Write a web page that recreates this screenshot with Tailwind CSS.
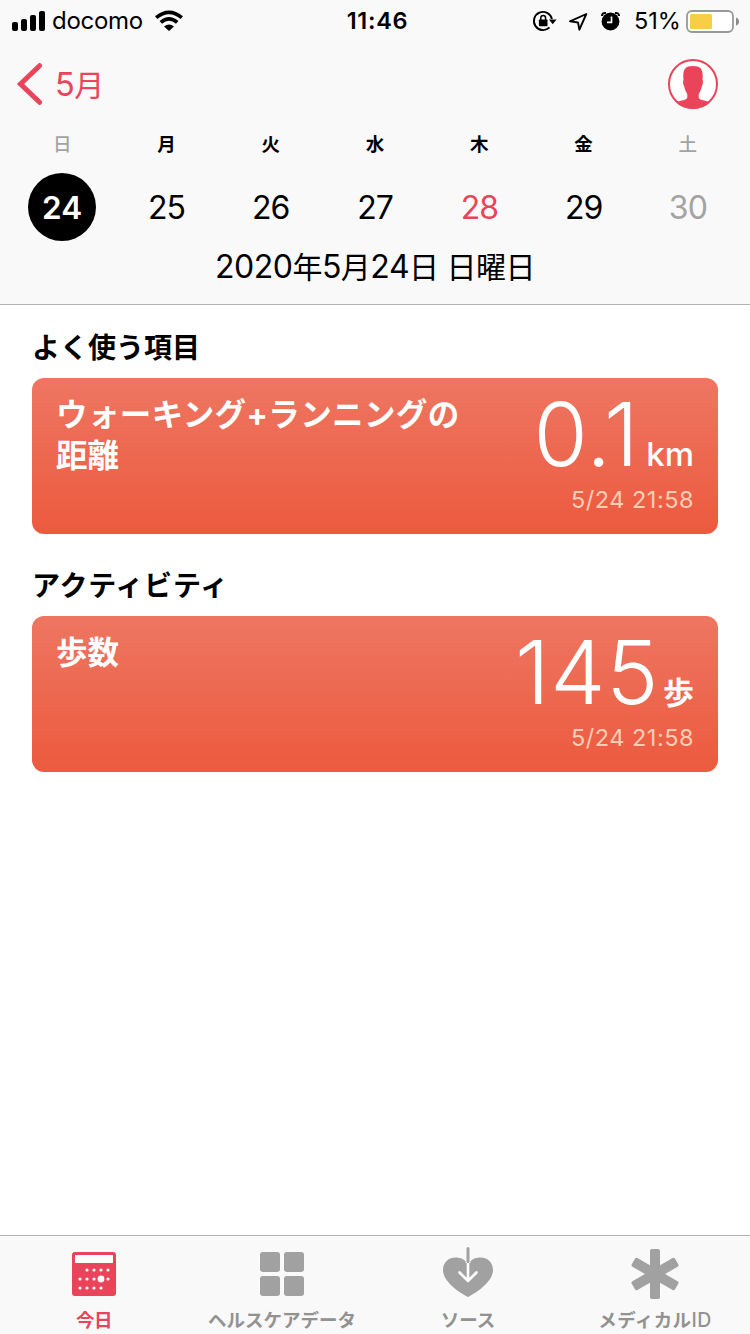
<!DOCTYPE html>
<html lang="ja">
<head>
<meta charset="utf-8">
<title>ヘルスケア</title>
<script src="https://cdn.jsdelivr.net/npm/@tailwindcss/browser@4"></script>
</head>
<body class="w-[750px] h-[1334px] overflow-hidden bg-white text-black font-['Inter','Noto_Sans_CJK_JP',sans-serif] flex flex-col">
<header class="h-[305px] bg-[#f9f9f9] border-b border-[#b2b2b2] flex flex-col shrink-0">
  <div class="h-10 grid grid-cols-[330px_95px_325px]">
    <div class="flex items-center">
      <svg class="ml-3 w-[34px] h-10 shrink-0" viewBox="12 0 34 40"><rect x="12" y="21" width="6" height="9" rx="2"/><rect x="21" y="18" width="6" height="12" rx="2"/><rect x="30" y="14" width="6" height="16" rx="2"/><rect x="39" y="10" width="6" height="20" rx="2"/></svg>
      <span class="ml-1.5 w-[102px] text-[24px] leading-[42px] whitespace-nowrap tracking-[-0.3px]">docomo</span>
      <svg class="w-[30px] h-10 shrink-0" viewBox="154 0 30 40"><g fill="none" stroke="#000" stroke-width="3.7"><path d="M156.2 16.600Q169 6 181.8 16.600"/><path d="M160.8 21.400Q169 14.400 177.2 21.400"/></g><path d="M169 30L164 25.600Q169 21.400 174 25.600Z"/></svg>
    </div>
    <div class="text-center text-[23.5px] tracking-[0.7px] font-semibold leading-[42px]">11:46</div>
    <div class="flex items-center">
      <svg class="ml-[106px] w-7 h-10 shrink-0" viewBox="530.5 0 28 40"><path d="M549 26.4A9.1 9.1 0 1 1 551.4 18" fill="none" stroke="#000" stroke-width="1.9"/><path d="M548.4 18.5H556L552.2 23.2Z"/><rect x="538.4" y="18.4" width="8.6" height="6.8" rx=".8"/><path d="M540.3 19.500V17A2.4 2.4 0 0 1 545.1 17V19.5" fill="none" stroke="#000" stroke-width="1.5"/></svg>
      <svg class="ml-2 w-[23px] h-10 shrink-0" viewBox="567 0 23 40"><path d="M586.3 13L570 20.3L578 21.5L579.4 28.7Z" fill="none" stroke="#000" stroke-width="1.9" stroke-linejoin="round"/></svg>
      <svg class="ml-2.5 w-[22px] h-10 shrink-0" viewBox="600 0 22 40"><circle cx="610.5" cy="20.5" r="8.9"/><path d="M602 15Q602 11.5 606 12M619 15Q619 11.5 615 12" fill="none" stroke="#000" stroke-width="2"/><path d="M611.5 15.5V21.3H607" fill="none" stroke="#f9f9f9" stroke-width="1.7"/></svg>
      <span class="ml-3 w-[51px] text-[23.5px] leading-[42px] whitespace-nowrap">51%</span>
      <svg class="w-[56px] h-10 shrink-0" viewBox="685 0 56 40"><rect x="687" y="10" width="46" height="21" rx="5" fill="#fff" stroke="#999" stroke-width="1.8"/><rect x="690" y="13" width="22" height="15" rx="1.5" fill="#f8ce45"/><path d="M736 16.5Q739 17.5 739 20.5T736 24.5Z" fill="#8a8a8a"/></svg>
    </div>
  </div>
  <nav class="h-[88px] flex items-center justify-between text-[#ea445a]">
    <div class="flex items-center">
      <svg class="ml-4 w-8 h-12" viewBox="16 60 32 48"><path d="M39.6 65.7L20.5 84L39.6 102.3" fill="none" stroke="currentColor" stroke-width="5" stroke-linecap="round"/></svg>
      <span class="ml-[7px] pt-0.5 text-[32.5px] leading-[48px] font-normal tracking-[-0.5px]">5<span class="text-[30px]">月</span></span>
    </div>
    <svg class="mr-[31px] w-[52px] h-[52px]" viewBox="667 58 52 52"><clipPath id="avatar"><circle cx="693" cy="84" r="25"/></clipPath><circle cx="693" cy="84" r="24" fill="#fff" stroke="currentColor" stroke-width="2"/><path clip-path="url(#avatar)" fill="currentColor" d="M683.5 80C682.6 70 684.5 66 693 66S703.4 70 702.5 80C703.4 81 702.8 84.5 701.8 86.5C701 90 700 92 698.7 94V97.5C699.5 100.5 705 100 710 102.5V110H676V102.5C681 100 686.5 100.5 687.3 97.5V94C686 92 685 90 684.2 86.5C683.2 84.5 682.6 81 683.5 80Z"/></svg>
  </nav>
  <div class="w-[730px] mx-auto grid grid-cols-7 text-center">
    <div class="h-8 leading-[32px] text-[18.5px] font-medium text-[#a3a3a3]">日</div>
    <div class="h-8 leading-[32px] text-[18.5px] font-bold">月</div>
    <div class="h-8 leading-[32px] text-[18.5px] font-bold">火</div>
    <div class="h-8 leading-[32px] text-[18.5px] font-bold">水</div>
    <div class="h-8 leading-[32px] text-[18.5px] font-bold">木</div>
    <div class="h-8 leading-[32px] text-[18.5px] font-bold">金</div>
    <div class="h-8 leading-[32px] text-[18.5px] font-medium text-[#a3a3a3]">土</div>
    <div class="mt-[13px] mx-auto size-[68px] rounded-full bg-black text-white text-[31.5px] leading-[70px] font-semibold">24</div>
    <div class="mt-[13px] h-[68px] text-[32px] leading-[70px] tracking-[-1px]">25</div>
    <div class="mt-[13px] h-[68px] text-[32px] leading-[70px] tracking-[-1px]">26</div>
    <div class="mt-[13px] h-[68px] text-[32px] leading-[70px] tracking-[-1px]">27</div>
    <div class="mt-[13px] h-[68px] text-[32px] leading-[70px] tracking-[-1px] text-[#ea445a]">28</div>
    <div class="mt-[13px] h-[68px] text-[32px] leading-[70px] tracking-[-1px]">29</div>
    <div class="mt-[13px] h-[68px] text-[32px] leading-[70px] tracking-[-1px] text-[#a3a3a3]">30</div>
  </div>
  <div class="text-center text-[32px] leading-[52px] tracking-[-0.5px]">2020<span class="text-[30px]">年</span>5<span class="text-[30px]">月</span>24<span class="text-[30px]">日 日曜日</span></div>
</header>

<main class="flex-1 px-8">
  <h2 class="mt-[22px] h-[51px] leading-[43px] text-[28px] font-bold">よく使う項目</h2>
  <section class="h-[156px] rounded-xl bg-linear-to-b/srgb from-[#ee7661] to-[#ec5a3f] text-white px-6 flex justify-between">
    <div class="w-[430px] pt-4 text-[31.5px] leading-[41px] font-bold"><span class="tracking-[0.4px]">ウォーキング+ランニングの</span><br>距離</div>
    <div class="pt-4 text-right">
      <div class="h-20 leading-[80px] whitespace-nowrap"><span class="text-[88px] font-light tracking-[0.6px]">0.1</span><span class="ml-[7px] text-[33px] font-medium">km</span></div>
      <div class="mt-[10px] text-[23.5px] leading-8 tracking-[0.5px] text-[#ffceb4]">5/24 21:58</div>
    </div>
  </section>
  <h2 class="mt-[31px] h-[51px] leading-[43px] text-[28px] font-bold tracking-[0.8px]">アクティビティ</h2>
  <section class="h-[156px] rounded-xl bg-linear-to-b/srgb from-[#ee7661] to-[#ec5a3f] text-white px-6 flex justify-between">
    <div class="w-[430px] pt-4 text-[31.5px] leading-[41px] font-bold">歩数</div>
    <div class="pt-4 text-right">
      <div class="h-20 leading-[80px] whitespace-nowrap"><span class="text-[88px] font-light tracking-[0.6px]">145</span><span class="ml-1 text-[31px] font-bold">歩</span></div>
      <div class="mt-[10px] text-[23.5px] leading-8 tracking-[0.5px] text-[#ffceb4]">5/24 21:58</div>
    </div>
  </section>
</main>

<footer class="h-[99px] shrink-0 border-t border-[#b2b2b2] bg-[#f9f9f9] grid grid-cols-[188px_188px_184px_190px] text-[18.5px] font-bold text-[#929292] text-center">
  <div class="pt-2 flex flex-col items-center text-[#ea445a]">
    <svg class="w-[60px] h-[60px]" viewBox="64 1244 60 60"><rect x="72" y="1252" width="44" height="44" rx="3" fill="currentColor"/><path d="M75 1255H113V1263H75Z" fill="#fff"/><g fill="#fff"><circle cx="87" cy="1270" r="1.6"/><circle cx="94" cy="1270" r="1.6"/><circle cx="101" cy="1270" r="1.6"/><circle cx="108" cy="1270" r="1.6"/><circle cx="80" cy="1279" r="1.6"/><circle cx="87" cy="1279" r="1.6"/><circle cx="94" cy="1279" r="1.6"/><circle cx="101" cy="1279" r="3.4"/><circle cx="108" cy="1279" r="1.6"/><circle cx="80" cy="1288" r="1.6"/><circle cx="87" cy="1288" r="1.6"/><circle cx="94" cy="1288" r="1.6"/><circle cx="101" cy="1288" r="1.6"/></g></svg>
    <span class="leading-[32px] tracking-[-0.5px]">今日</span>
  </div>
  <div class="pt-2 flex flex-col items-center">
    <svg class="w-[60px] h-[60px] text-[#a1a1a1]" viewBox="252 1244 60 60" fill="currentColor"><rect x="260" y="1252" width="20" height="20" rx="3"/><rect x="284" y="1252" width="20" height="20" rx="3"/><rect x="260" y="1276" width="20" height="20" rx="3"/><rect x="284" y="1276" width="20" height="20" rx="3"/></svg>
    <span class="leading-[32px]">ヘルスケアデータ</span>
  </div>
  <div class="pt-2 flex flex-col items-center">
    <svg class="w-[60px] h-[60px] text-[#a1a1a1]" viewBox="438 1244 60 60"><path fill="currentColor" d="M468 1297C458 1292 443 1281 443 1270C443 1262 449 1257.5 455.5 1257.5C460.5 1257.5 465 1259.5 468 1264C471 1259.5 475.5 1257.5 480.5 1257.5C487 1257.5 493 1262 493 1270C493 1281 478 1292 468 1297Z"/><path d="M468 1259V1281M459.5 1272.5L468 1281L476.5 1272.5" fill="none" stroke="#fff" stroke-width="2.6" stroke-linecap="round"/><path d="M465.6 1256H470.4V1263H465.6Z" fill="#f9f9f9"/><path d="M468 1248.5V1261.5" stroke="currentColor" stroke-width="3" stroke-linecap="round"/></svg>
    <span class="leading-[32px]">ソース</span>
  </div>
  <div class="pt-2 flex flex-col items-center">
    <svg class="w-[60px] h-[60px] text-[#a1a1a1]" viewBox="625 1244 60 60" fill="currentColor"><rect id="bar" x="650" y="1249" width="10" height="50" rx="1.8"/><use href="#bar" transform="rotate(60 655 1274)"/><use href="#bar" transform="rotate(-60 655 1274)"/></svg>
    <span class="leading-[32px] tracking-[0.4px]">メディカル<span class="font-medium text-[19.5px]">ID</span></span>
  </div>
</footer>
</body>
</html>
